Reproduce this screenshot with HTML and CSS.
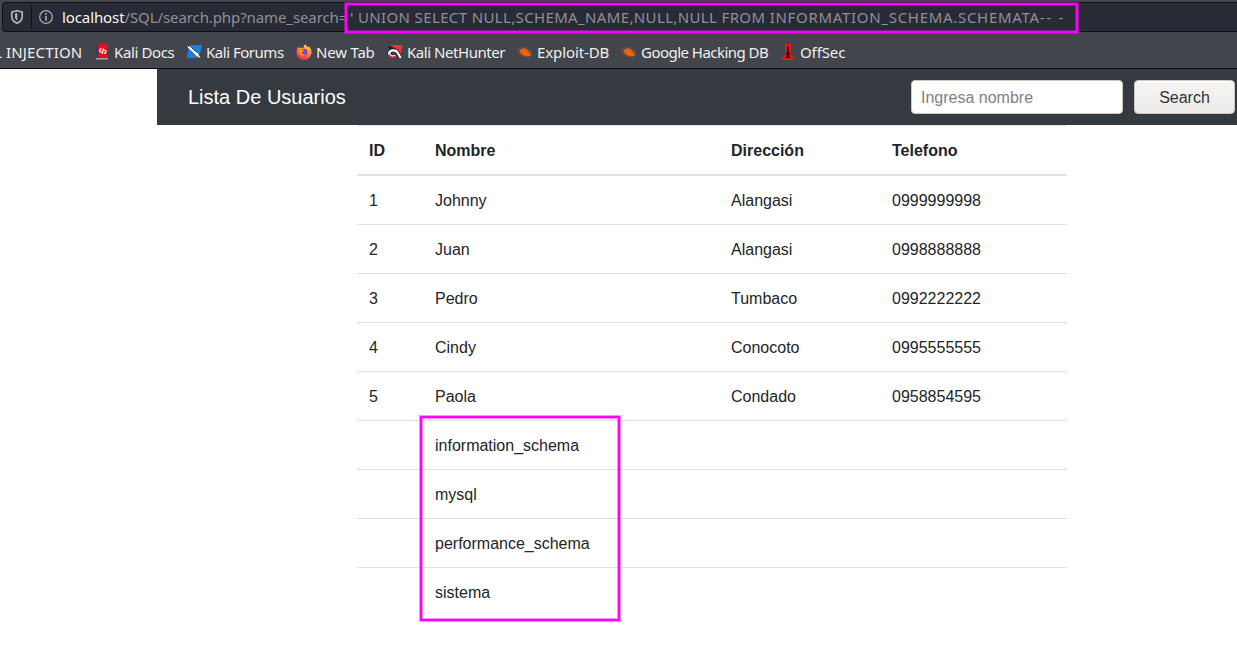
FILE: index.html
```
<!DOCTYPE html>
<html lang="es">
<head>
<meta charset="utf-8">
<title>Lista De Usuarios</title>
<link rel="stylesheet" href="styles.css">
</head>
<body>
<header class="browser">
  <div class="urlbar">
    <svg class="shield" width="14" height="16" viewBox="0 0 14 16"><path d="M7 1.700 12.200 3v4.500c0 3.200-2 5.400-5.200 6.800C3.800 12.900 1.800 10.700 1.800 7.500V3z" fill="none" stroke="#b4b5b9" stroke-width="1.700" stroke-linejoin="round"/><path d="M7.300 4v7.600c-1.800-.9-2.300-2.300-2.300-4.300V4.600z" fill="#b4b5b9"/></svg>
    <span class="divider"></span>
    <svg class="info" width="16" height="16" viewBox="0 0 16 16"><circle cx="8" cy="8" r="6.300" fill="none" stroke="#a9aaae" stroke-width="1.300"/><path d="M8 7v4.800M8 4.100v1.700" stroke="#a9aaae" stroke-width="1.700"/></svg>
    <div class="url"><span class="host">localhost</span><span class="path">/SQL/search.php?name_search=</span><span class="query">' UNION SELECT NULL,SCHEMA_NAME,NULL,NULL FROM <span class="from">INFORMATION_SCHEMA.SCHEMATA</span><span class="dashes">-- -</span></span></div>
    <div class="mark mark-url"></div>
  </div>
  <nav class="bookmarks">
    <span class="bm bm-sql">L INJECTION</span>
    <span class="bm bm-docs"><svg width="16" height="16" viewBox="0 0 16 16"><path d="M2 0h2v14.500H2z" fill="#20407c"/><path d="M4 0h10v13.500H4z" fill="#d9141b"/><path d="M2 14h12v1.500H2z" fill="#a9a4a8"/><path d="M7.800 4.800C6.300 4.800 5.500 5.500 5.500 6.500s1 1.500 2.300 1.500M9.800 6c1.500 0 2.200.8 2.200 1.700s-.8 1.500-2.200 1.500M9.600 4.500 8 9.800" fill="none" stroke="#fff" stroke-width="1.200"/></svg>Kali Docs</span>
    <span class="bm bm-forums"><svg width="16" height="16" viewBox="0 0 16 16"><path d="M3 1h13l-3 13H1z" fill="#1683ed"/><path d="M0 1.500 4.500 2.500l5 5 2.500 1 3.500 6.500-5.500-2.500-2-2.500-5-4.500z" fill="#f4f5f8" stroke="#20232b" stroke-width=".7"/></svg>Kali Forums</span>
    <span class="bm bm-tab"><svg width="16" height="16" viewBox="0 0 16 16"><defs><linearGradient id="fox" x1=".8" y1="0" x2=".3" y2="1"><stop offset="0" stop-color="#ffe849"/><stop offset=".45" stop-color="#ff9128"/><stop offset="1" stop-color="#f51c62"/></linearGradient></defs><path d="M9.500 0c.2 1.600 1.300 2.300 2.500 3.300l.8-.8c2 1.600 3 4 2.700 6.500-.5 3.900-3.500 6.800-7.500 6.800C3.700 15.800.5 12.600.5 8.400c0-2.500 1-4.600 2.300-6l.4 1.800L5 3.600c1.500.2 2 .5 2.500.9C7.500 2.800 8.200 1 9.500 0z" fill="url(#fox)"/><circle cx="8.300" cy="8" r="3.200" fill="#7f43dc"/><path d="M3.500 6.200c1.700-.5 3.300-.5 4.800.2-.6 1-2.200.8-2.600 1.900-.3 1.500 1.400 2.700 3.200 1.700-1 2.200-4.100 2.300-5.200.1z" fill="#ff9b2a"/></svg>New Tab</span>
    <span class="bm bm-net"><svg width="16" height="16" viewBox="0 0 16 16"><path d="M3 1h13l-3 11z" fill="#f22d36"/><path d="M1 2h3l5 3-5 4z" fill="#20232b"/><path d="m13.800 14-3.300-5.500C9 5.800 3 5.500 2.200 9c-.5 3 3.800 4 6.300 2.800" fill="none" stroke="#20232b" stroke-width="3.600"/><path d="m13.800 14-3.300-5.500C9 5.800 3 5.500 2.200 9c-.5 3 3.800 4 6.300 2.800" fill="none" stroke="#fff" stroke-width="2.200"/><path d="M1.800 10.500c1 3.500 5 3.500 7.200 1.300" fill="none" stroke="#e21e47" stroke-width="1.600"/></svg>Kali NetHunter</span>
    <span class="bm bm-exploit"><svg width="16" height="16" viewBox="0 0 16 16"><path d="M2.500 6.500C5 3 9.500 4 12.500 8l1.500 4c-4 1-8 0-10-2.500z" fill="#f2600c"/><path d="M0 5l4 2M6 5 5 3M9 5l1-2M11 7.500l4-1M5 9.500l-3 1M8 11l-1 2M4 8H1M13 10l2 0" stroke="#b95a28" stroke-width=".8"/></svg>Exploit-DB</span>
    <span class="bm bm-google"><svg width="16" height="16" viewBox="0 0 16 16"><path d="M2.500 6.500C5 3 9.500 4 12.500 8l1.500 4c-4 1-8 0-10-2.500z" fill="#f2600c"/><path d="M0 5l4 2M6 5 5 3M9 5l1-2M11 7.500l4-1M5 9.500l-3 1M8 11l-1 2M4 8H1M13 10l2 0" stroke="#b95a28" stroke-width=".8"/></svg>Google Hacking DB</span>
    <span class="bm bm-off"><svg width="16" height="16" viewBox="0 0 16 16"><path d="M5 0h6v10l3 5v1H1v-1l4-4z" fill="#e3171d"/><path d="M7 2h2v5l1 3-1 2 2 2H5l2-2-1-2 1-3z" fill="#3a090e"/></svg>OffSec</span>
  </nav>
</header>
<main class="page">
  <div class="navbar">
    <span class="brand">Lista De Usuarios</span>
    <input class="search" type="text" placeholder="Ingresa nombre">
    <button class="submit" type="button">Search</button>
  </div>
  <div class="results">
    <table class="users">
      <colgroup><col class="c-id"><col class="c-name"><col class="c-dir"><col class="c-tel"></colgroup>
      <thead><tr><th>ID</th><th>Nombre</th><th>Dirección</th><th>Telefono</th></tr></thead>
      <tbody>
        <tr><td>1</td><td>Johnny</td><td>Alangasi</td><td>0999999998</td></tr>
        <tr><td>2</td><td>Juan</td><td>Alangasi</td><td>0998888888</td></tr>
        <tr><td>3</td><td>Pedro</td><td>Tumbaco</td><td>0992222222</td></tr>
        <tr><td>4</td><td>Cindy</td><td>Conocoto</td><td>0995555555</td></tr>
        <tr><td>5</td><td>Paola</td><td>Condado</td><td>0958854595</td></tr>
        <tr><td></td><td>information_schema</td><td></td><td></td></tr>
        <tr><td></td><td>mysql</td><td></td><td></td></tr>
        <tr><td></td><td>performance_schema</td><td></td><td></td></tr>
        <tr><td></td><td>sistema</td><td></td><td></td></tr>
      </tbody>
    </table>
    <div class="mark mark-rows"></div>
  </div>
</main>
</body>
</html>
```
FILE: styles.css
```
* { box-sizing: border-box; }
body { margin: 0; height: 652px; overflow: hidden; background: #fff; color: #212529; font: 16px/24px "Liberation Sans", Arial, sans-serif; }
.browser { height: 69px; padding-top: 2px; background: #42454c; border-bottom: 1px solid #0c0c0d; font-family: "Noto Sans", sans-serif; font-size: 15px; }
.urlbar { position: relative; display: flex; align-items: center; height: 30px; margin-left: 2px; padding-left: 7px; background: #282a36; border: 1px solid #0f1014; border-right: 0; border-radius: 4px 0 0 4px; }
.shield { flex: none; }
.divider { flex: none; width: 1px; height: 22px; margin: 0 6px 0 7px; background: #0f1014; }
.info { flex: none; margin-right: 8px; }
.url { display: flex; line-height: 28px; white-space: pre; color: #8f9095; }
.host { color: #f8f8f2; width: 62.500px; letter-spacing: -.1px; }
.path { width: 225.500px; letter-spacing: -.1px; }
.query { letter-spacing: .36px; }
.from { letter-spacing: .7px; }
.dashes { letter-spacing: 1.700px; }
.bookmarks { display: flex; height: 36px; padding-top: 3px; align-items: center; color: #f0f0ec; line-height: 20px; white-space: nowrap; overflow: hidden; }
.bm { flex: none; display: flex; align-items: center; gap: 4px; }
.bm svg { flex: none; }
.bm-sql { width: 100px; margin-left: -6px; letter-spacing: .15px; }
.bm-docs { width: 92px; letter-spacing: -.37px; }
.bm-forums { width: 110px; letter-spacing: -.48px; }
.bm-tab { width: 91px; letter-spacing: -.2px; }
.bm-net { width: 130px; letter-spacing: -.45px; }
.bm-exploit { width: 104px; letter-spacing: -.1px; }
.bm-google { width: 159px; letter-spacing: -.53px; }
.bm-off { letter-spacing: -.1px; }
.mark { position: absolute; border: 2px solid #f0f; box-shadow: 0 0 0 1px rgba(255,0,255,.45), inset 0 0 0 1px rgba(255,0,255,.45); }
.mark-url { left: 342px; top: 0; width: 733px; height: 30px; }
.mark-rows { left: 63px; top: 291px; width: 200px; height: 205px; }
.navbar { display: flex; align-items: center; height: 56px; margin-left: 157px; padding: 0 2px 0 31px; background: #343a40; }
.brand { flex: 1; color: #fff; font-size: 20px; line-height: 30px; }
.search { width: 212px; height: 34px; margin: 0 11px 0 0; padding: 2px 9px 0; border: 1px solid #cdc7c2; border-radius: 4px; background: #fff; font: 16px "Liberation Sans", Arial, sans-serif; }
.search::placeholder { color: #7f7f7f; opacity: 1; }
.submit { width: 101px; height: 34px; padding: 2px 0 0; border: 1px solid #cdc7c2; border-radius: 4px; background: linear-gradient(#f6f5f4, #edebe9); color: #2e3436; font: 16px "Liberation Sans", Arial, sans-serif; box-shadow: inset 0 1px #fff; }
.results { position: relative; width: 710px; margin-left: 357px; }
.users { width: 710px; table-layout: fixed; border-collapse: separate; border-spacing: 0; }
.c-id { width: 66px; }
.c-name { width: 296px; }
.c-dir { width: 161px; }
.users th, .users td { height: 49px; padding: 13px 12px 11px; border-top: 1px solid #dee2e6; text-align: left; }
.users th { height: 51px; border-bottom: 2px solid #dee2e6; }
.users tbody tr:first-child td { height: 48px; border-top: 0; }
```
